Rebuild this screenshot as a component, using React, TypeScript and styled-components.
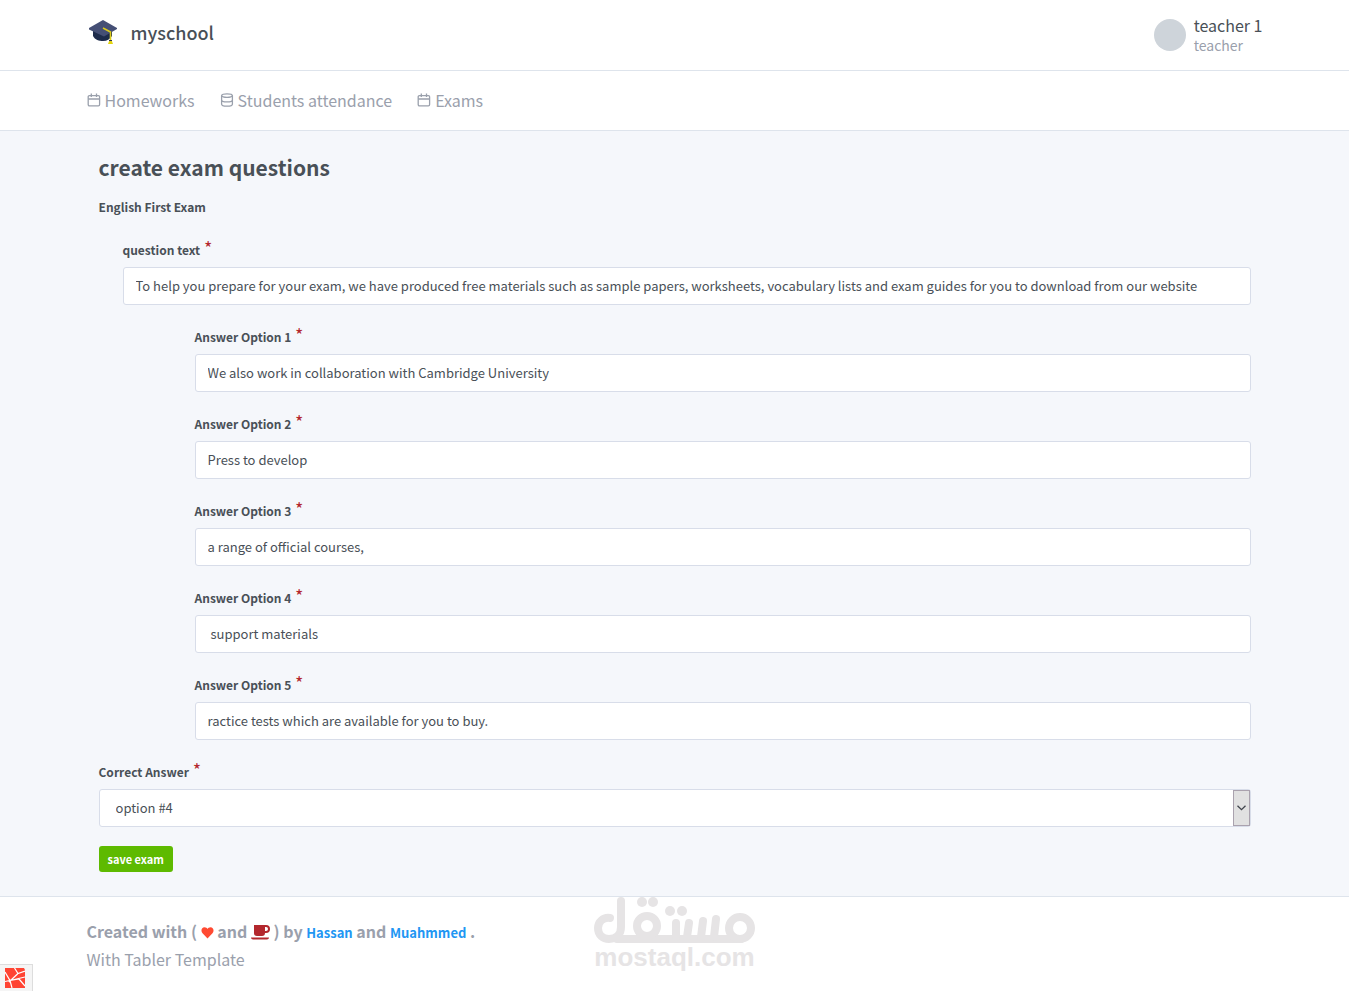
import React from "react";
import styled, { createGlobalStyle } from "styled-components";

const Global = createGlobalStyle`
  *, *::before, *::after { box-sizing: border-box; }
  html, body, #root { min-height: 100vh; }
  body {
    margin: 0;
    background: #f5f7fb;
    color: #495057;
    font: 400 14px/24px "Noto Sans CJK SC", "Noto Sans", sans-serif;
  }
  input, select, button { font-family: inherit; }
`;

const Page = styled.div`
  display: flex;
  flex-direction: column;
  min-height: 100vh;
`;

const Container = styled.div`
  width: 100%;
  max-width: 1200px;
  margin: 0 auto;
  padding: 0 12px;
`;

const Header = styled.header`
  background: #fff;
  border-bottom: 1px solid #dee4ec;
`;

const HeaderRow = styled(Container)`
  display: flex;
  align-items: center;
  justify-content: space-between;
  height: 70px;
`;

const Brand = styled.a`
  display: flex;
  align-items: center;
  gap: 12px;
  padding-bottom: 6px;
  color: #495057;
  font-size: 18px;
  font-weight: 500;
  text-decoration: none;
`;

const User = styled.a`
  display: flex;
  align-items: center;
  gap: 8px;
  color: #495057;
  text-decoration: none;
`;

const Avatar = styled.span`
  width: 32px;
  height: 32px;
  border-radius: 50%;
  background: #ced4da;
`;

const UserText = styled.span`
  display: flex;
  flex-direction: column;
  font-size: 16px;
  line-height: 20px;
`;

const UserRole = styled.small`
  color: #9aa0ac;
  font-size: 14px;
  line-height: 20px;
`;

const Nav = styled.nav`
  background: #fff;
  border-bottom: 1px solid #dee4ec;
`;

const NavRow = styled(Container)`
  display: flex;
  align-items: center;
  gap: 25px;
  height: 59px;
  padding-bottom: 2px;
`;

const NavLink = styled.a`
  display: flex;
  align-items: center;
  gap: 4px;
  color: #9aa0ac;
  font-size: 16px;
  text-decoration: none;
`;

const Main = styled.main`
  flex: 1 0 auto;
  padding: 16px 0 24px;
`;

const Form = styled.form`
  padding: 0 12px;
`;

const Title = styled.h1`
  margin: 0;
  font-size: 21px;
  font-weight: 700;
  line-height: 40px;
`;

const Subtitle = styled.h2`
  margin: 8px 0 18px;
  font-size: 12px;
  font-weight: 700;
  line-height: 24px;
`;

const Field = styled.div<{ $indent?: number }>`
  margin: 0 0 19px ${(p) => p.$indent ?? 0}px;
`;

const Label = styled.label`
  display: block;
  height: 22px;
  margin-bottom: 8px;
  font-size: 12px;
  font-weight: 700;
  line-height: 22px;
`;

const Required = styled.span`
  margin-left: 1px;
  color: #b3272d;
  font-size: 18px;
  font-weight: 400;
  line-height: 20px;
`;

const TextBox = styled.input`
  display: block;
  width: 100%;
  height: 38px;
  padding: 0 12px 2px;
  border: 1px solid #d8dde9;
  border-radius: 3px;
  background: #fff;
  color: #495057;
  font-size: 13px;
  outline: none;
`;

const SelectWrap = styled.div`
  position: relative;
`;

const Select = styled.select`
  display: block;
  width: 100%;
  height: 38px;
  padding: 0 32px 2px 16px;
  border: 1px solid #d8dde9;
  border-radius: 3px;
  background: #fff;
  color: #495057;
  font-size: 13px;
  appearance: none;
  outline: none;
`;

const SelectArrow = styled.span`
  position: absolute;
  top: 1px;
  right: 1px;
  bottom: 1px;
  display: flex;
  align-items: center;
  justify-content: center;
  width: 17px;
  border: 1px solid #aaa2ae;
  background: #e1e1e1;
  pointer-events: none;
`;

const SaveButton = styled.button`
  display: block;
  height: 26px;
  padding: 0 9px;
  border: 0;
  border-radius: 3px;
  background: #5eba00;
  color: #fff;
  font-size: 11px;
  font-weight: 700;
`;

const Footer = styled.footer`
  position: relative;
  padding: 21px 0 20px;
  border-top: 1px solid #dee4ec;
  background: #fff;
  color: #9aa0ac;
  font-size: 16px;
  line-height: 26px;
`;

const Credits = styled.p`
  margin: 0;
  font-weight: 700;

  svg { vertical-align: -2px; }
`;

const Template = styled.p`
  margin: 0;
`;

const AuthorLink = styled.a`
  color: #2196f3;
  font-size: 13px;
  text-decoration: none;
`;

const Watermark = styled.div`
  position: absolute;
  top: 0;
  left: 50%;
  width: 164px;
  transform: translateX(-50%);
  color: #e6e4e5;
  pointer-events: none;
`;

const WatermarkArt = styled.svg`
  display: block;
`;

const WatermarkText = styled.span`
  display: block;
  font: 700 26px/24px "Liberation Sans", Arial, sans-serif;
  text-align: center;
`;

const DebugToggle = styled.button`
  position: fixed;
  left: 0;
  bottom: 0;
  display: flex;
  align-items: center;
  justify-content: flex-start;
  width: 33px;
  height: 27px;
  padding: 0 0 0 5px;
  border: 1px solid #ddd;
  border-width: 1px 1px 0 0;
  background: #f5f5f5;
`;

const CalendarIcon = () => (
  <svg width="14" height="14" viewBox="0 0 14 14" fill="none" stroke="currentColor" strokeWidth="1.3" aria-hidden="true">
    <rect x="1.2" y="2.6" width="11.4" height="10.2" rx="1.2" />
    <path d="M1.2 6h11.4M4.3 .6v3.4M9.5 .6v3.4" />
  </svg>
);

const DatabaseIcon = () => (
  <svg width="14" height="14" viewBox="0 0 14 14" fill="none" stroke="currentColor" strokeWidth="1.3" aria-hidden="true">
    <ellipse cx="7" cy="2.6" rx="5.4" ry="1.8" />
    <path d="M1.6 2.6v8.6c0 1.1 2.4 1.9 5.4 1.9s5.4-.8 5.4-1.9V2.6M1.6 6.9c0 1.1 2.4 1.9 5.4 1.9s5.4-.8 5.4-1.9" />
  </svg>
);

const CapIcon = () => (
  <svg width="32" height="32" viewBox="0 0 32 32" aria-hidden="true">
    <path d="M6 14v6c2 4 6 5 10 5s7-2 9-5v-6z" fill="#1d2b4b" />
    <path d="M16 4 30 12v1L17 20.5 2 13.5V12z" fill="#454f75" />
    <path d="m16 12 7.5 4v8" fill="none" stroke="#dccb1b" strokeWidth="1.6" />
    <path d="M22.5 24h2l1.5 4h-5z" fill="#e3d40e" />
    <path d="M22 24h3v1h-3z" fill="#2c3450" />
  </svg>
);

const HeartIcon = () => (
  <svg width="13" height="13" viewBox="0 0 13 13" aria-hidden="true">
    <path d="M6.500 11.500 1.300 6C-.500 3.700.800.200 3.500.200c1.500 0 2.500.8 3 1.800C7 1 8 .200 9.500.200c2.700 0 4 3.500 2.200 5.800z" fill="#ff4a32" />
  </svg>
);

const CoffeeIcon = () => (
  <svg width="19" height="15" viewBox="0 0 19 15" aria-hidden="true">
    <path fillRule="evenodd" d="M3 0h12a4 4 0 0 1 0 8h-1c0 2-1 3-3 3H6C4 11 3 10 3 8zM14 2v4h1a2 2 0 0 0 0-4z" fill="#b3272d" />
    <path d="M0 12.5h18c0 1-1 2-2 2H2c-1 0-2-1-2-2z" fill="#b3272d" />
  </svg>
);

const DebugIcon = () => (
  <svg width="20" height="20" viewBox="0 0 20 20" aria-hidden="true">
    <path d="M0 0h19l1 2v18H0z" fill="#ff4433" />
    <path d="M0 4 5 12.500 20 9M9.500 0l3.500 5.500L20 3M0 13.500l5-1 2 7.500M13 5.500 4 14M5 12.500 14 11l6 7" fill="none" stroke="#fff" strokeWidth="1.2" />
  </svg>
);

const options = [
  "We also work in collaboration with Cambridge University",
  "Press to develop",
  "a range of official courses,",
  " support materials",
  "ractice tests which are available for you to buy.",
];

export default function App() {
  return (
    <Page>
      <Global />
      <Header>
        <HeaderRow>
          <Brand href="#">
            <CapIcon />
            myschool
          </Brand>
          <User href="#">
            <Avatar />
            <UserText>
              teacher 1<UserRole>teacher</UserRole>
            </UserText>
          </User>
        </HeaderRow>
      </Header>
      <Nav>
        <NavRow>
          <NavLink href="#"><CalendarIcon />Homeworks</NavLink>
          <NavLink href="#"><DatabaseIcon />Students attendance</NavLink>
          <NavLink href="#"><CalendarIcon />Exams</NavLink>
        </NavRow>
      </Nav>
      <Main>
        <Container>
          <Form onSubmit={(e) => e.preventDefault()}>
            <Title>create exam questions</Title>
            <Subtitle>English First Exam</Subtitle>
            <Field $indent={24}>
              <Label htmlFor="question">question text <Required>*</Required></Label>
              <TextBox
                id="question"
                defaultValue="To help you prepare for your exam, we have produced free materials such as sample papers, worksheets, vocabulary lists and exam guides for you to download from our website"
              />
            </Field>
            {options.map((text, i) => (
              <Field $indent={96} key={i}>
                <Label htmlFor={`option-${i + 1}`}>Answer Option {i + 1} <Required>*</Required></Label>
                <TextBox id={`option-${i + 1}`} defaultValue={text} />
              </Field>
            ))}
            <Field>
              <Label htmlFor="correct">Correct Answer <Required>*</Required></Label>
              <SelectWrap>
                <Select id="correct" defaultValue="4">
                  {options.map((_, i) => (
                    <option key={i} value={i + 1}>option #{i + 1}</option>
                  ))}
                </Select>
                <SelectArrow>
                  <svg width="9" height="6" viewBox="0 0 9 6" fill="none" stroke="#41454d" strokeWidth="1.3" aria-hidden="true">
                    <path d="m.5.7 4 4 4-4" />
                  </svg>
                </SelectArrow>
              </SelectWrap>
            </Field>
            <SaveButton type="submit">save exam</SaveButton>
          </Form>
        </Container>
      </Main>
      <Footer>
        <Container>
          <Credits>
            Created with ( <HeartIcon /> and <CoffeeIcon /> ) by <AuthorLink href="#">Hassan</AuthorLink> and{" "}
            <AuthorLink href="#">Muahmmed</AuthorLink> .
          </Credits>
          <Template>With Tabler Template</Template>
        </Container>
        <Watermark>
          <WatermarkArt width="164" height="48" viewBox="0 0 164 48" fill="none" stroke="currentColor" strokeWidth="8" strokeLinecap="round" aria-hidden="true">
            <path d="M17 21C10 20 5 25 5 31c0 7 5 11 11 11 8 0 12-5 12-12V4M24 42H148" />
            <circle cx="54" cy="29" r="10" />
            <circle cx="147" cy="31" r="11" />
            <path d="M83 26v14M96 26l-2 14M110 24l-2 16M123 22l-2 18" />
            <g fill="currentColor" stroke="none">
              <circle cx="49" cy="5" r="5" />
              <circle cx="60" cy="5" r="5" />
              <circle cx="77" cy="14" r="5" />
              <circle cx="89" cy="14" r="5" />
            </g>
          </WatermarkArt>
          <WatermarkText>mostaql.com</WatermarkText>
        </Watermark>
      </Footer>
      <DebugToggle type="button" aria-label="Open debug bar"><DebugIcon /></DebugToggle>
    </Page>
  );
}
